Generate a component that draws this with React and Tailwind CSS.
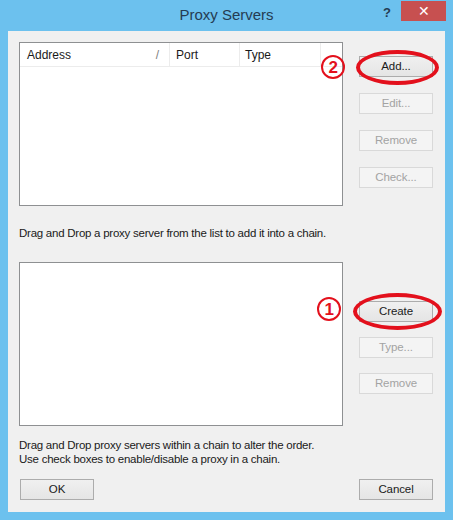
const font = { fontFamily: '"Segoe UI", "Liberation Sans", Arial, sans-serif' };

function Btn({ children, disabled }) {
  return (
    <div
      className={`flex h-[21px] w-[74px] items-center justify-center border text-[11.5px] tracking-[-0.1px] ${
        disabled
          ? "border-[#d9d9d9] bg-[#f4f4f4] text-[#a3a3a3]"
          : "border-[#acacac] bg-gradient-to-b from-[#f0f0f0] to-[#e5e5e5] text-[#1a1a1a]"
      }`}
    >
      {children}
    </div>
  );
}

function Ring({ className }) {
  return <div className={`pointer-events-none absolute rounded-[50%] border-[4px] border-[#e3101c] ${className}`} />;
}

function Num({ n, className }) {
  return (
    <div
      className={`absolute flex h-[24px] w-[24px] items-center justify-center rounded-full border-2 border-[#e3101c] text-[17px] font-semibold leading-none text-[#e3101c] ${className}`}
    >
      {n}
    </div>
  );
}

export default function App() {
  return (
    <div className="relative h-[520px] w-[453px] bg-[#6cc1ee]" style={font}>
      <div className="flex h-[31px] items-center justify-center pb-[1px] text-[15px] text-[#253c52]">
        Proxy Servers
      </div>
      <div className="absolute left-[383px] top-[3px] text-[13px] font-bold text-[#253c52]">?</div>
      <div className="absolute left-[401px] top-[1px] flex h-[20px] w-[45px] items-center justify-center bg-[#c75050] text-[14px] leading-none text-white">
        ✕
      </div>

      <div className="relative mx-[8px] h-[481px] bg-[#f0f0f0] text-[11.5px] tracking-[-0.25px] text-[#1a1a1a]">
        <div className="flex pt-[11px]">
          <div className="ml-[11px] h-[164px] w-[324px] border border-[#8e9092] bg-white">
            <div className="flex h-[24px] border-b border-[#ececec] text-[12px] tracking-normal">
              <div className="flex w-[150px] items-center justify-between border-r border-[#ececec] pl-[7px] pr-[10px]">
                <span>Address</span>
                <span className="text-[#808080]">/</span>
              </div>
              <div className="flex w-[70px] items-center border-r border-[#ececec] pl-[6px]">Port</div>
              <div className="flex w-[81px] items-center border-r border-[#ececec] pl-[5px]">Type</div>
            </div>
          </div>
          <div className="ml-[16px] flex flex-col gap-[16px] pt-[14px]">
            <Btn>Add...</Btn>
            <Btn disabled>Edit...</Btn>
            <Btn disabled>Remove</Btn>
            <Btn disabled>Check...</Btn>
          </div>
        </div>

        <div className="ml-[11px] mt-[20px] leading-[15px]">
          Drag and Drop a proxy server from the list to add it into a chain.
        </div>

        <div className="mt-[21px] flex">
          <div className="ml-[11px] h-[164px] w-[324px] border border-[#8e9092] bg-white" />
          <div className="ml-[16px] flex flex-col gap-[15px] pt-[39px]">
            <Btn>Create</Btn>
            <Btn disabled>Type...</Btn>
            <Btn disabled>Remove</Btn>
          </div>
        </div>

        <div className="ml-[11px] mt-[12px] leading-[14px]">
          <div>Drag and Drop proxy servers within a chain to alter the order.</div>
          <div>Use check boxes to enable/disable a proxy in a chain.</div>
        </div>

        <div className="mx-[12px] mt-[13px] flex justify-between">
          <Btn>OK</Btn>
          <Btn>Cancel</Btn>
        </div>

        <Ring className="left-[348px] top-[19px] h-[35px] w-[83px]" />
        <Num n="2" className="left-[313px] top-[24px]" />
        <Ring className="left-[345px] top-[262px] h-[37px] w-[89px]" />
        <Num n="1" className="left-[309px] top-[266px]" />
      </div>
    </div>
  );
}
